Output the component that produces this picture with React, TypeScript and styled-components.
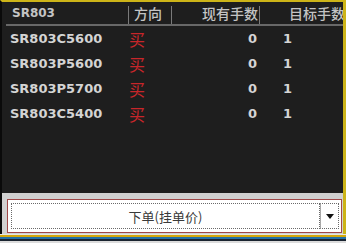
import React from 'react';
import styled, { createGlobalStyle } from 'styled-components';

const GlobalStyle = createGlobalStyle`
  html, body {
    margin: 0;
    padding: 0;
    background: #1e1e1e;
  }
`;

const Frame = styled.div`
  width: 346px;
  height: 243px;
  display: flex;
  flex-direction: column;
  overflow: hidden;
  font-family: "DejaVu Sans", "Noto Sans CJK SC", sans-serif;
`;

const Main = styled.div`
  flex: 1;
  display: flex;
  flex-direction: column;
  border-top: 2px solid #cdb418;
  border-right: 3px solid #cdb418;
  border-left: 2px solid #0a0a0a;
  background: #1e1e1e;
  min-height: 0;
`;

const Grid = styled.div`
  flex: 1;
  display: flex;
  flex-direction: column;
`;

const columns = '127px 43px 88px 1fr';

const HeaderRow = styled.div`
  display: grid;
  grid-template-columns: ${columns};
  height: 22px;
`;

const HeaderLine = styled.div`
  height: 2px;
  margin-left: 4px;
  background: #686868;
`;

const HeaderCell = styled.div<{ $align?: 'left' | 'right'; $pad?: number; $divider?: boolean; $cjk?: boolean }>`
  display: flex;
  align-items: center;
  justify-content: ${p => (p.$align === 'right' ? 'flex-end' : 'flex-start')};
  padding: 0 ${p => (p.$align === 'right' ? 2 : 0)}px 0 ${p => p.$pad ?? 0}px;
  font-family: ${p => (p.$cjk ? '"Noto Sans CJK SC", sans-serif' : 'inherit')};
  font-size: ${p => (p.$cjk ? 14 : 12)}px;
  font-weight: ${p => (p.$cjk ? 500 : 'bold')};
  color: #c4c4c4;
  white-space: nowrap;
  overflow: hidden;
  position: relative;
  &::after {
    content: '';
    display: ${p => (p.$divider ? 'block' : 'none')};
    position: absolute;
    right: 0;
    top: 4px;
    bottom: 0;
    width: 1px;
    background: #7a7a7a;
  }
`;

const Row = styled.div`
  display: grid;
  grid-template-columns: ${columns};
  height: 25px;
`;

const Cell = styled.div<{ $align?: 'left' | 'right'; $pad?: number; $red?: boolean }>`
  display: flex;
  align-items: center;
  justify-content: ${p => (p.$align === 'right' ? 'flex-end' : 'flex-start')};
  padding: 0 ${p => (p.$align === 'right' ? 3 : 0)}px 0 ${p => p.$pad ?? 0}px;
  font-size: ${p => (p.$red ? 16 : 13)}px;
  font-weight: ${p => (p.$red ? 'normal' : 'bold')};
  color: ${p => (p.$red ? '#c8262a' : '#d4d4d4')};
  white-space: nowrap;
  overflow: hidden;
`;

const Panel = styled.div`
  background: #d0d0d0;
  padding: 6px 1px 1px 5px;
`;

const OrderButton = styled.div`
  display: flex;
  height: 32px;
  background: #ffffff;
  border: 1px solid #a04848;
`;

const MainAction = styled.div`
  flex: 1;
  display: flex;
  align-items: center;
  justify-content: center;
  margin: 3px 0 3px 3px;
  border: 1px dotted #6a6a6a;
  font-family: "Noto Sans CJK SC", sans-serif;
  font-size: 13px;
  color: #3a3a3a;
`;

const DropToggle = styled.div`
  width: 17px;
  display: flex;
  align-items: center;
  justify-content: center;
  margin: 3px 2px 3px 0;
  border: 1px dotted #6a6a6a;
  border-left: 1px solid #a8a8a8;
`;

const Arrow = styled.div`
  width: 0;
  height: 0;
  border-left: 4px solid transparent;
  border-right: 4px solid transparent;
  border-top: 5px solid #111111;
`;

const Stripe = styled.div<{ $color: string; $h: number }>`
  height: ${p => p.$h}px;
  background: ${p => p.$color};
`;

const rows = ['SR803C5600', 'SR803P5600', 'SR803P5700', 'SR803C5400'];

export default function App() {
  return (
    <Frame>
      <GlobalStyle />
      <Main>
        <Grid>
          <HeaderRow>
            <HeaderCell $pad={10} $divider>SR803</HeaderCell>
            <HeaderCell $pad={5} $divider $cjk>方向</HeaderCell>
            <HeaderCell $align="right" $divider $cjk>现有手数</HeaderCell>
            <HeaderCell $pad={29} $cjk>目标手数</HeaderCell>
          </HeaderRow>
          <HeaderLine />
          {rows.map(code => (
            <Row key={code}>
              <Cell $pad={8}>{code}</Cell>
              <Cell $pad={0} $red>买</Cell>
              <Cell $align="right">0</Cell>
              <Cell $pad={23}>1</Cell>
            </Row>
          ))}
        </Grid>
        <Panel>
          <OrderButton>
            <MainAction>下单(挂单价)</MainAction>
            <DropToggle>
              <Arrow />
            </DropToggle>
          </OrderButton>
        </Panel>
      </Main>
      <Stripe $color="#e6e6e6" $h={1} />
      <Stripe $color="#d6a80c" $h={2} />
      <Stripe $color="#2470a8" $h={2} />
      <Stripe $color="#1a2430" $h={2} />
      <Stripe $color="#dcdcdc" $h={2} />
    </Frame>
  );
}
